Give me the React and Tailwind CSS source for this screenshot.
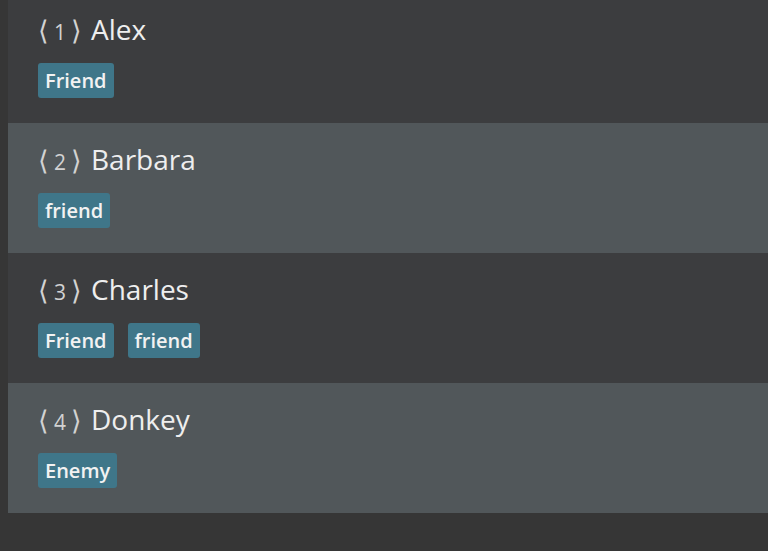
import React from "react";

const people = [
  { id: 1, name: "Alex", tags: ["Friend"] },
  { id: 2, name: "Barbara", tags: ["friend"] },
  { id: 3, name: "Charles", tags: ["Friend", "friend"] },
  { id: 4, name: "Donkey", tags: ["Enemy"] },
];

export default function App() {
  return (
    <div
      className="min-h-screen bg-[#363636] pl-2 text-[#eeeeee]"
      style={{ fontFamily: '"Open Sans", "DejaVu Sans", sans-serif' }}
    >
      {people.map((p, idx) => (
        <div
          key={p.id}
          className={`h-[130px] pl-[30px] ${idx % 2 === 0 ? "bg-[#3c3d3f]" : "bg-[#51575a]"} ${idx === 0 ? "mt-[-7px]" : ""}`}
        >
          <div className="flex items-baseline h-[36px] translate-y-[15px]">
            <span className="text-[#d2d2d2] text-[27px] font-light">⟨</span>
            <span className="mx-[5px] text-[21px] text-[#d2d2d2]">{p.id}</span>
            <span className="text-[#d2d2d2] text-[27px] font-light">⟩</span>
            <span className="ml-[9px] text-[28px]">{p.name}</span>
          </div>
          <div className="flex gap-[14px] mt-[34px]">
            {p.tags.map((t, i) => (
              <span
                key={i}
                className="h-[35px] px-[7px] flex items-center rounded-[3px] bg-[#3f7689] text-[20px] font-semibold text-[#f2f2f2]"
              >
                {t}
              </span>
            ))}
          </div>
        </div>
      ))}
    </div>
  );
}
